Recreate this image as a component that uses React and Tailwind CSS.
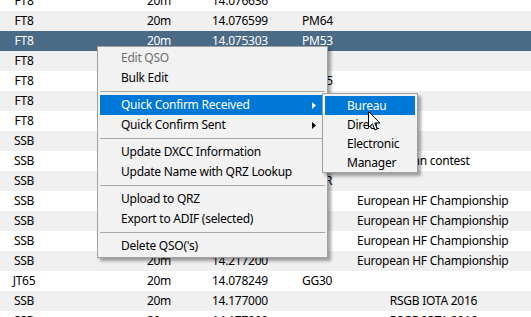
import React from "react";

// rows 3..12 have their band/frequency hidden under the menu anyway
const rows = [
  ["FT8", "20m", "14.076636", "", ""],
  ["FT8", "20m", "14.076599", "PM64", ""],
  ["FT8", "20m", "14.075303", "PM53", ""],
  ["FT8", "", "", "", ""],
  ["FT8", "", "", "PM95", ""],
  ["FT8", "", "", "", ""],
  ["FT8", "", "", "", ""],
  ["SSB", "", "", "", ""],
  ["SSB", "", "", "", "Asian contest"],
  ["SSB", "", "", "OK1R", ""],
  ["SSB", "", "", "", "European HF Championship 2016"],
  ["SSB", "", "", "", "European HF Championship 2016"],
  ["SSB", "", "", "", "European HF Championship 2016"],
  ["SSB", "20m", "14.217200", "", "European HF Championship 2016"],
  ["JT65", "20m", "14.078249", "GG30", ""],
  ["SSB", "20m", "14.177000", "", "RSGB IOTA 2016"],
  ["SSB", "20m", "14.177000", "", "RSGB IOTA 2016"],
];

function Row({ r, i }) {
  const selected = i === 2;
  const bg = selected ? "bg-[#4b6a86] text-white" : i % 2 === 1 ? "bg-[#f0f0f0] text-black" : "bg-white text-black";
  return (
    <div className={`flex h-[20px] items-center whitespace-nowrap ${bg}`}>
      <div className="w-[48px] text-center">{r[0]}</div>
      <div className="w-[72px]"></div>
      <div className="w-[78px] text-center">{r[1]}</div>
      <div className="w-[92px] pl-[14px]">{r[2]}</div>
      <div className="w-[67px] pl-[12px]">{r[3]}</div>
      <div className="w-[153px] overflow-hidden text-center">{r[4]}</div>
      <div className="flex-1"></div>
    </div>
  );
}

function Arrow({ white }) {
  return (
    <svg width="4" height="7" viewBox="0 0 4 7" className="absolute right-[9px] top-[7px]">
      <path d="M0 0 L4 3.5 L0 7 Z" fill={white ? "#ffffff" : "#000000"} />
    </svg>
  );
}

function Item({ label, disabled, active, sub }) {
  return (
    <div
      className={`relative mx-[2px] h-[20px] pl-[21px] leading-[20px] whitespace-nowrap ${
        active ? "bg-[#0078d7] text-white" : disabled ? "text-[#6d6d6d]" : "text-black"
      }`}
    >
      {label}
      {sub && <Arrow white={active} />}
    </div>
  );
}

function Sep() {
  return (
    <div className="h-[7px] px-[2px] pt-[3px]">
      <div className="h-px bg-[#a8a8a8]"></div>
    </div>
  );
}

export default function App() {
  return (
    <div
      className="relative h-[317px] w-[531px] overflow-hidden bg-white text-[12px] tracking-[-0.25px]"
      style={{ fontFamily: '"Noto Sans", "Open Sans", sans-serif' }}
    >
      <div className="mt-[-9px]">
        {rows.map((r, i) => (
          <Row key={i} r={r} i={i} />
        ))}
      </div>

      {/* context menu */}
      <div className="absolute left-[97px] top-[46px] w-[231px] border border-[#a0a0a0] bg-[#f2f2f2] py-[1px] shadow-[3px_3px_3px_rgba(0,0,0,0.35)]">
        <Item label="Edit QSO" disabled />
        <Item label="Bulk Edit" />
        <Sep />
        <Item label="Quick Confirm Received" active sub />
        <Item label="Quick Confirm Sent" sub />
        <Sep />
        <Item label="Update DXCC Information" />
        <Item label="Update Name with QRZ Lookup" />
        <Sep />
        <Item label="Upload to QRZ" />
        <Item label="Export to ADIF (selected)" />
        <Sep />
        <Item label="Delete QSO('s)" />
      </div>

      {/* submenu */}
      <div className="absolute left-[322px] top-[93px] w-[96px] border border-[#a0a0a0] bg-[#f2f2f2] pt-[2px] shadow-[3px_3px_3px_rgba(0,0,0,0.35)]">
        {["Bureau", "Direct", "Electronic", "Manager"].map((s, i) => (
          <div
            key={s}
            className={`mx-[2px] h-[19px] pl-[22px] leading-[19px] ${i === 0 ? "bg-[#0078d7] text-white" : "text-black"}`}
          >
            {s}
          </div>
        ))}
      </div>

      {/* mouse pointer */}
      <svg width="13" height="21" viewBox="0 0 13 21" className="absolute left-[368px] top-[111px]">
        <path
          d="M0.5 0.5 L0.5 16.5 L4.5 12.8 L7 19 L9.2 18 L6.8 12 L11.8 12 Z"
          fill="#ffffff"
          stroke="#000000"
          strokeWidth="1"
          strokeLinejoin="miter"
        />
      </svg>
    </div>
  );
}
